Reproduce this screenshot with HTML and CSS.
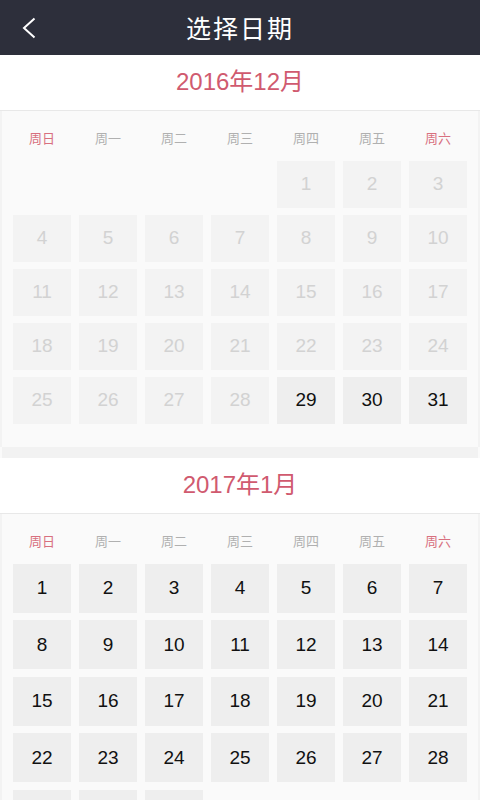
FILE: index.html
```html
<!DOCTYPE html>
<html lang="zh-CN">
<head>
<meta charset="utf-8">
<title>选择日期</title>
<link rel="stylesheet" href="styles.css">
</head>
<body>
<header class="topbar">
  <div class="back">
    <svg width="14" height="22" viewBox="0 0 14 22"><polyline points="12.5,1.5 2,11 12.5,20.5" fill="none" stroke="#ffffff" stroke-width="2"/></svg>
  </div>
  <h1 class="title">选择日期</h1>
  <div></div>
</header>

<section class="month">
  <h2 class="month-title">2016年12月</h2>
  <div class="panel">
    <div class="weekdays">
      <span class="wk red">周日</span><span class="wk">周一</span><span class="wk">周二</span><span class="wk">周三</span><span class="wk">周四</span><span class="wk">周五</span><span class="wk red">周六</span>
    </div>
    <div class="grid dec">
      <span class="empty"></span><span class="empty"></span><span class="empty"></span><span class="empty"></span>
      <span class="day off">1</span><span class="day off">2</span><span class="day off">3</span>
      <span class="day off">4</span><span class="day off">5</span><span class="day off">6</span><span class="day off">7</span><span class="day off">8</span><span class="day off">9</span><span class="day off">10</span>
      <span class="day off">11</span><span class="day off">12</span><span class="day off">13</span><span class="day off">14</span><span class="day off">15</span><span class="day off">16</span><span class="day off">17</span>
      <span class="day off">18</span><span class="day off">19</span><span class="day off">20</span><span class="day off">21</span><span class="day off">22</span><span class="day off">23</span><span class="day off">24</span>
      <span class="day off">25</span><span class="day off">26</span><span class="day off">27</span><span class="day off">28</span><span class="day">29</span><span class="day">30</span><span class="day">31</span>
    </div>
  </div>
</section>

<div class="band"></div>

<section class="month">
  <h2 class="month-title">2017年1月</h2>
  <div class="panel">
    <div class="weekdays">
      <span class="wk red">周日</span><span class="wk">周一</span><span class="wk">周二</span><span class="wk">周三</span><span class="wk">周四</span><span class="wk">周五</span><span class="wk red">周六</span>
    </div>
    <div class="grid jan">
      <span class="day">1</span><span class="day">2</span><span class="day">3</span><span class="day">4</span><span class="day">5</span><span class="day">6</span><span class="day">7</span>
      <span class="day">8</span><span class="day">9</span><span class="day">10</span><span class="day">11</span><span class="day">12</span><span class="day">13</span><span class="day">14</span>
      <span class="day">15</span><span class="day">16</span><span class="day">17</span><span class="day">18</span><span class="day">19</span><span class="day">20</span><span class="day">21</span>
      <span class="day">22</span><span class="day">23</span><span class="day">24</span><span class="day">25</span><span class="day">26</span><span class="day">27</span><span class="day">28</span>
      <span class="day">29</span><span class="day">30</span><span class="day">31</span>
    </div>
  </div>
</section>
</body>
</html>
```

FILE: styles.css
```css
* { box-sizing: border-box; }
html, body { margin: 0; padding: 0; }
body {
  width: 480px;
  min-height: 800px;
  background: #fafafa;
  font-family: "Liberation Sans", "Noto Sans CJK SC", sans-serif;
  overflow: hidden;
}
.topbar {
  height: 55px;
  background: #2d2f3b;
  display: grid;
  grid-template-columns: 1fr auto 1fr;
  align-items: center;
}
.back {
  padding-left: 22px;
  display: flex;
  align-items: center;
  padding-top: 1px;
}
.back svg { display: block; }
.title {
  margin: 0;
  color: #ffffff;
  font-family: "Noto Sans CJK SC", sans-serif;
  font-weight: 400;
  font-size: 25px;
  letter-spacing: 2px;
  line-height: 55px;
}
.month-title {
  margin: 0;
  height: 56px;
  background: #ffffff;
  border-bottom: 1px solid #e8e8e8;
  text-align: center;
  color: #d05a6f;
  font-weight: 400;
  font-size: 24px;
  line-height: 54px;
  font-family: "Liberation Sans", "Noto Sans CJK SC", sans-serif;
}
.panel {
  background: #fafafa;
  border-left: 2px solid #f3f3f3;
  border-right: 2px solid #f3f3f3;
  padding: 0 11px;
}
.weekdays {
  display: grid;
  grid-template-columns: repeat(7, 1fr);
  column-gap: 8px;
  padding-top: 19px;
  padding-bottom: 15px;
}
.wk {
  text-align: center;
  font-family: "Noto Sans CJK SC", sans-serif;
  font-size: 13px;
  line-height: 16px;
  color: #b0b0b0;
}
.wk.red { color: #d8707f; }
.grid {
  display: grid;
  grid-template-columns: repeat(7, 1fr);
  column-gap: 8px;
  row-gap: 7.5px;
}
.grid.dec { grid-auto-rows: 46.5px; padding-bottom: 23px; }
.grid.jan { grid-auto-rows: 49px; }
.day {
  background: #eeeeee;
  color: #111111;
  font-size: 19px;
  display: flex;
  align-items: center;
  justify-content: center;
}
.day.off {
  background: #f3f3f3;
  color: #d2d2d2;
}
.band {
  height: 11px;
  background: #f2f2f2;
  margin: 0 2px;
}
```
